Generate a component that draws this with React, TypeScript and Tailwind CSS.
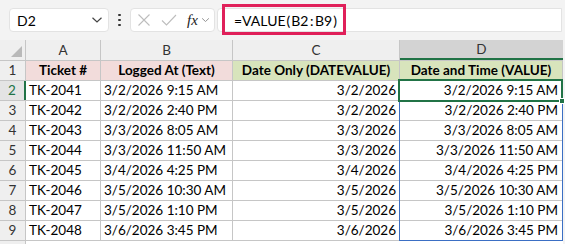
import React from "react";

const rows = [
  ["TK-2041", "3/2/2026 9:15 AM", "3/2/2026", "3/2/2026 9:15 AM"],
  ["TK-2042", "3/2/2026 2:40 PM", "3/2/2026", "3/2/2026 2:40 PM"],
  ["TK-2043", "3/3/2026 8:05 AM", "3/3/2026", "3/3/2026 8:05 AM"],
  ["TK-2044", "3/3/2026 11:50 AM", "3/3/2026", "3/3/2026 11:50 AM"],
  ["TK-2045", "3/4/2026 4:25 PM", "3/4/2026", "3/4/2026 4:25 PM"],
  ["TK-2046", "3/5/2026 10:30 AM", "3/5/2026", "3/5/2026 10:30 AM"],
  ["TK-2047", "3/5/2026 1:10 PM", "3/5/2026", "3/5/2026 1:10 PM"],
  ["TK-2048", "3/6/2026 3:45 PM", "3/6/2026", "3/6/2026 3:45 PM"],
];

const cell = "h-full border-r border-[#c6c6c6] flex items-center px-[3px] whitespace-nowrap overflow-hidden";

function Chevron({ className = "" }: { className?: string }) {
  return (
    <svg width="12" height="8" viewBox="0 0 12 8" className={className}>
      <path d="M1.5 1.8 L6 6 L10.5 1.8" fill="none" stroke="currentColor" strokeWidth="1.2" />
    </svg>
  );
}

export default function App() {
  return (
    <div
      className="w-[565px] h-[244px] overflow-hidden bg-[#f3f3f3] text-black relative"
      style={{ fontFamily: "Lato, 'Open Sans', sans-serif" }}
    >
      {/* formula bar */}
      <div className="h-[40px] flex items-center pl-[9px] pr-[3px]">
        <div className="w-[100px] h-[24px] bg-white rounded-[4px] border border-[#e3e3e3] flex items-center justify-between pl-[7px] pr-[5px] text-[14px]">
          <span>D2</span>
          <Chevron className="text-[#444]" />
        </div>
        <div className="w-[21px] flex flex-col items-center gap-[2.5px]">
          <span className="w-[2.5px] h-[2.5px] rounded-full bg-[#333]" />
          <span className="w-[2.5px] h-[2.5px] rounded-full bg-[#333]" />
          <span className="w-[2.5px] h-[2.5px] rounded-full bg-[#333]" />
        </div>
        <div className="w-[85px] h-[24px] bg-white rounded-[4px] border border-[#e3e3e3] flex items-center pl-[6px]">
          <svg width="14" height="14" viewBox="0 0 14 14">
            <path d="M1.5 1.5 L12.5 12.5 M12.5 1.5 L1.5 12.5" stroke="#bdbdbd" strokeWidth="1.1" />
          </svg>
          <svg width="16" height="14" viewBox="0 0 16 14" className="ml-[10px]">
            <path d="M1 7.5 L5.5 12 L15 2" fill="none" stroke="#bdbdbd" strokeWidth="1.1" />
          </svg>
          <span
            className="ml-[10px] text-[15px] italic text-[#222] leading-none"
            style={{ fontFamily: "'Liberation Serif', serif" }}
          >
            fx
          </span>
          <Chevron className="ml-[3px] text-[#888] w-[9px]" />
        </div>
        <div className="flex-1 ml-[2px] h-[24px] bg-white rounded-l-[4px] border border-[#e3e3e3] flex items-center pl-[16px] text-[14px]">
          =VALUE<span className="mx-[1px]">(</span>B2<span className="mx-[1.5px]">:</span>B9<span className="mx-[1px]">)</span>
        </div>
      </div>
      <div className="absolute left-[222px] top-[4px] w-[124px] h-[31px] border-[3px] border-[#e0205a]" />

      {/* grid */}
      <div className="relative w-[563px] text-[13.5px]">
        <div className="flex h-[21px] border-b border-[#c6c6c6] bg-[#efefef] text-[#333]">
          <div className="w-[26px] h-full border-r border-[#c6c6c6] flex items-end justify-end pr-[3px] pb-[3px]">
            <svg width="11" height="11" viewBox="0 0 11 11">
              <path d="M11 0 L11 11 L0 11 Z" fill="#b9b9b9" />
            </svg>
          </div>
          <div className="w-[75px] h-full border-r border-[#c6c6c6] flex items-center justify-center">A</div>
          <div className="w-[132px] h-full border-r border-[#c6c6c6] flex items-center justify-center">B</div>
          <div className="w-[167px] h-full border-r border-[#c6c6c6] flex items-center justify-center">C</div>
          <div className="w-[163px] h-full bg-[#d3d3d3] border-b-2 border-[#217346] flex items-center justify-center">D</div>
        </div>
        <div className="flex h-[20px] border-b border-[#c6c6c6] bg-white font-bold">
          <div className="w-[26px] h-full border-r border-[#c6c6c6] bg-[#efefef] flex items-center justify-center font-normal text-[#333]">1</div>
          <div className={`${cell} w-[75px] justify-center bg-[#f2dcdb]`}>Ticket #</div>
          <div className={`${cell} w-[132px] justify-center bg-[#f2dcdb]`}>Logged At (Text)</div>
          <div className={`${cell} w-[167px] justify-center bg-[#d8e4bc]`}>Date Only (DATEVALUE)</div>
          <div className={`${cell} w-[163px] justify-center bg-[#d8e4bc]`}>Date and Time (VALUE)</div>
        </div>
        {rows.map((r, i) => (
          <div key={i} className="flex h-[20px] border-b border-[#c6c6c6] bg-white">
            <div
              className={`w-[26px] h-full flex items-center justify-center ${
                i === 0
                  ? "bg-[#e4e4e4] text-[#217346] border-r-2 border-[#217346]"
                  : "bg-[#efefef] text-[#333] border-r border-[#c6c6c6]"
              }`}
            >
              {i + 2}
            </div>
            <div className={`${cell} w-[75px]`}>{r[0]}</div>
            <div className={`${cell} w-[132px]`}>{r[1]}</div>
            <div className={`${cell} w-[167px] justify-end`}>{r[2]}</div>
            <div className={`${cell} w-[163px] justify-end pr-[4px]`}>{r[3]}</div>
          </div>
        ))}
        <div className="flex h-[10px] bg-white">
          <div className="w-[26px] h-full bg-[#efefef] border-r border-[#c6c6c6]" />
        </div>

        {/* range + active cell */}
        <div className="absolute left-[399px] top-[40px] w-[164px] h-[161px] border border-[#3b6fc4]" />
        <div className="absolute left-[398px] top-[39px] w-[165px] h-[23px] border-2 border-[#217346]" />
        <div className="absolute left-[559px] top-[58px] w-[6px] h-[6px] bg-[#217346] border border-white" />
      </div>
    </div>
  );
}
